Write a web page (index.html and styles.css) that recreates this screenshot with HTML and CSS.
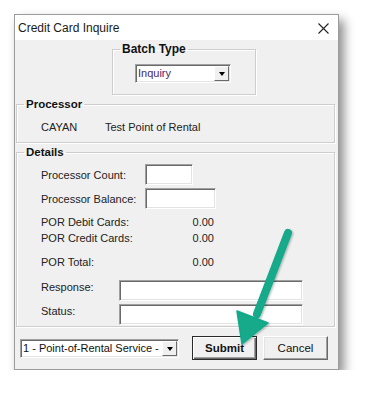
FILE: index.html
```html
<!DOCTYPE html>
<html lang="en">
<head>
  <meta charset="UTF-8">
  <title>Credit Card Inquire</title>
  <meta name="viewport" content="width=device-width, initial-scale=1.0">
  <link rel="stylesheet" href="styles.css">
</head>
<body>
  <div class="window">
    <div class="titlebar">
      <span>Credit Card Inquire</span>
      <svg class="close" width="11" height="11" viewBox="0 0 11 11">
        <path d="M0.5 0.5 L10.5 10.5 M10.5 0.5 L0.5 10.5" stroke="#222" stroke-width="1.1" fill="none"/>
      </svg>
    </div>
    <div class="client">
      <fieldset class="group batch">
        <legend>Batch Type</legend>
        <div class="combo batch-combo">
          <span class="combo-text purple">Inquiry</span>
          <span class="drop"><i></i></span>
        </div>
      </fieldset>

      <fieldset class="group processor">
        <legend>Processor</legend>
        <div class="proc-row">
          <span class="proc-name">CAYAN</span>
          <span>Test Point of Rental</span>
        </div>
      </fieldset>

      <fieldset class="group details">
        <legend>Details</legend>
        <div class="field-row">
          <label class="lbl-wide">Processor Count:</label>
          <span class="edit count"></span>
        </div>
        <div class="field-row">
          <label class="lbl-wide">Processor Balance:</label>
          <span class="edit balance"></span>
        </div>
        <div class="totals">
          <div class="total-row"><span>POR Debit Cards:</span><span class="amt">0.00</span></div>
          <div class="total-row"><span>POR Credit Cards:</span><span class="amt">0.00</span></div>
          <div class="total-row por-total"><span>POR Total:</span><span class="amt">0.00</span></div>
        </div>
        <div class="field-row resp first">
          <label class="lbl-short">Response:</label>
          <span class="edit long"></span>
        </div>
        <div class="field-row resp">
          <label class="lbl-short">Status:</label>
          <span class="edit long"></span>
        </div>
      </fieldset>

      <div class="footer">
        <div class="combo service-combo">
          <span class="combo-text">1 - Point-of-Rental Service - Default</span>
          <span class="drop"><i></i></span>
        </div>
        <button class="btn default">Submit</button>
        <button class="btn">Cancel</button>
      </div>
    </div>
  </div>

  <svg class="pointer" width="375" height="407" viewBox="0 0 375 407">
    <defs>
      <filter id="soft" x="-20%" y="-20%" width="140%" height="140%">
        <feDropShadow dx="1" dy="1" stdDeviation="1.2" flood-color="#000" flood-opacity="0.3"/>
      </filter>
    </defs>
    <g filter="url(#soft)" fill="#12a98a" stroke="#12a98a">
      <line x1="288" y1="233" x2="257" y2="314" stroke-width="8" stroke-linecap="round"/>
      <polygon points="237,311 268,323 242,344" stroke-width="1.5" stroke-linejoin="round"/>
    </g>
  </svg>
</body>
</html>
```

FILE: styles.css
```css
body { margin: 0; background: #fff; font-family: "Liberation Sans", Arial, sans-serif; font-size: 11px; color: #111; }

.window { margin: 14px 0 0 14px; width: 325px; height: 356px; box-sizing: border-box; border: 1px solid #9c9c9c; background: #f0f0f0; box-shadow: 5px 6px 10px rgba(0,0,0,0.45); display: flex; flex-direction: column; }
.titlebar { height: 25px; flex: none; background: #fff; display: flex; align-items: center; justify-content: space-between; padding: 1px 9px 0 3px; box-sizing: border-box; font-size: 12px; color: #1a1a1a; }
.close { display: block; }
.client { flex: 1; display: flex; flex-direction: column; }

/* group boxes */
.group { margin: 0; border: 1px solid #cdcdcd; box-shadow: inset 1px 1px 0 #fff, 1px 1px 0 #fff; min-width: 0; }
.group legend { font-weight: bold; font-size: 11.5px; line-height: 14px; padding: 0 2px; margin-left: -17px; color: #111; }

.batch { width: 144px; box-sizing: border-box; margin: 2px 0 0 97px; padding: 8px 0 11px 22px; }
.batch legend { font-size: 12px; margin-left: -15px; }
.processor { margin: 2px 3px 0 1px; padding: 9px 0 8px 24px; }
.details { margin: 2px 3px 0 1px; padding: 5px 0 1px 24px; }

/* combo boxes */
.combo { display: flex; align-items: center; height: 19px; box-sizing: border-box; background: #fff; border: 1px solid; border-color: #a0a0a0 #fff #fff #a0a0a0; box-shadow: inset 1px 1px 0 #6a6a6a, inset -1px -1px 0 #e3e3e3; padding: 1px 1px 1px 2px; overflow: hidden; }
.combo-text { flex: 1; white-space: nowrap; overflow: hidden; line-height: 15px; font-size: 11px; color: #111; }
.combo-text.purple { color: #4a2a6a; }
.drop { width: 15px; height: 15px; flex: none; box-sizing: border-box; background: #f0f0f0; border: 1px solid; border-color: #fff #6a6a6a #6a6a6a #fff; display: flex; align-items: center; justify-content: center; }
.drop i { width: 0; height: 0; border-left: 3.5px solid transparent; border-right: 3.5px solid transparent; border-top: 4px solid #000; margin-top: 1px; }
.batch-combo { width: 96px; }

.proc-row { display: flex; line-height: 14px; color: #222; }
.proc-name { width: 64px; }

/* detail fields */
.field-row { display: flex; align-items: flex-start; margin-top: 3px; }
.field-row:first-of-type { margin-top: 0; }
.field-row label { line-height: 14px; padding-top: 4px; color: #222; }
.lbl-wide { width: 104px; flex: none; }
.lbl-short { width: 78px; flex: none; }
.field-row.resp label { padding-top: 0; }
.field-row.first { margin-top: 10px; }

.edit { display: block; height: 21px; box-sizing: border-box; background: #fff; border: 1px solid; border-color: #a0a0a0 #fff #fff #a0a0a0; box-shadow: inset 1px 1px 0 #6a6a6a, inset -1px -1px 0 #e3e3e3; }
.edit.count { width: 48px; }
.edit.balance { width: 71px; }
.edit.long { width: 184px; }

.totals { margin-top: 5px; color: #222; }
.total-row { display: flex; line-height: 16px; }
.total-row span:first-child { width: 110px; }
.amt { width: 63px; text-align: right; }
.por-total { margin-top: 8px; }

/* footer */
.footer { display: flex; align-items: center; margin: 9px 0 0 5px; }
.service-combo { width: 159px; margin-right: 13px; }
.btn { width: 65px; height: 24px; box-sizing: border-box; font-family: inherit; font-size: 11.5px; color: #111; background: #f0f0f0; border: 1px solid; border-color: #fff #6a6a6a #6a6a6a #fff; box-shadow: inset -1px -1px 0 #a0a0a0, inset 1px 1px 0 #e3e3e3; padding: 0; margin-right: 6px; }
.btn.default { font-weight: bold; border: 1px solid #2a2a2a; box-shadow: inset 1px 1px 0 #fff, inset -1px -1px 0 #6a6a6a, inset -2px -2px 0 #a0a0a0; }

.pointer { position: absolute; left: 0; top: 0; pointer-events: none; }
```
